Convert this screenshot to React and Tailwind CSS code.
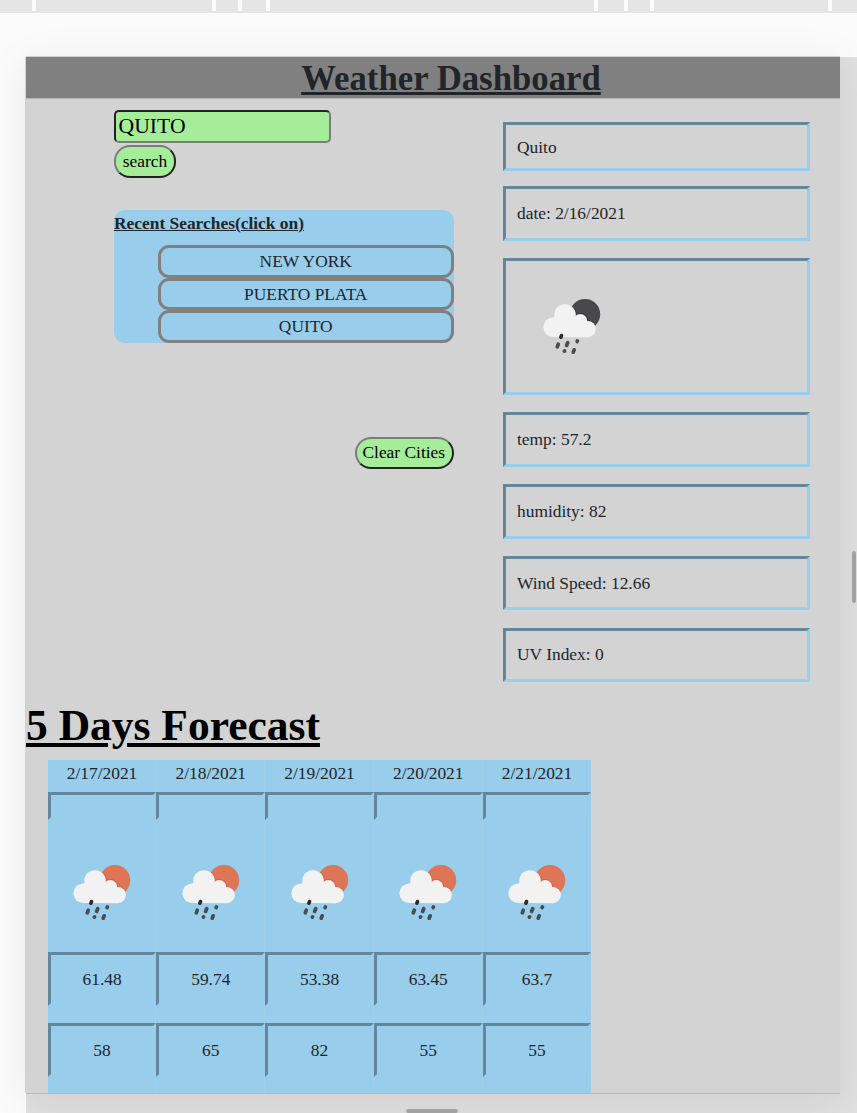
import React, { useId } from "react";

const details = [
  { text: "Quito", box: "h-[49px] mb-[15px] pt-[1px]" },
  { text: "date: 2/16/2021", box: "h-[55px] mb-[17px]" },
  { icon: true, box: "h-[137px] mb-[17px]" },
  { text: "temp: 57.2", box: "h-[55px] mb-[17px]" },
  { text: "humidity: 82", box: "h-[55px] mb-[17px]" },
  { text: "Wind Speed: 12.66", box: "h-[54px] mb-[18px]" },
  { text: "UV Index: 0", box: "h-[54px] pb-[1px]" },
];

const forecast = [
  { date: "2/17/2021", temp: "61.48", humidity: "58" },
  { date: "2/18/2021", temp: "59.74", humidity: "65" },
  { date: "2/19/2021", temp: "53.38", humidity: "82" },
  { date: "2/20/2021", temp: "63.45", humidity: "55" },
  { date: "2/21/2021", temp: "63.7", humidity: "55" },
];

const tabGaps = [
  "ml-[32px]",
  "ml-[176px]",
  "ml-[22px]",
  "ml-[24px]",
  "ml-[324px]",
  "ml-[26px]",
  "ml-[22px]",
  "ml-[174px]",
];

function RainIcon({ color, shade }) {
  const id = useId();
  return (
    <svg width="60" height="57" viewBox="12 8 60 57" className="block shrink-0">
      <clipPath id={id}>
        <circle cx="55" cy="24.2" r="15.2" />
      </clipPath>
      <circle cx="55" cy="24.2" r="15.2" fill={color} />
      <g clipPath={`url(#${id})`} fill={shade}>
        <circle cx="35" cy="25" r="11.6" />
        <circle cx="50.5" cy="30.4" r="7.6" />
        <circle cx="57.8" cy="39.2" r="9" />
      </g>
      <g fill="#f2f2f2">
        <circle cx="23.2" cy="37.2" r="9.8" />
        <circle cx="35" cy="25" r="10.8" />
        <circle cx="50.3" cy="30.8" r="6.9" />
        <circle cx="57.8" cy="39.1" r="8.1" />
        <path d="M23 28 L35 20 L46 28 L57 33 L58 47.2 L23.2 47 Z" />
      </g>
      <g stroke="#4b4b4d" strokeWidth="3.7" strokeLinecap="round">
        <path d="M31.5 45.6 L30.9 47.2" stroke="#2b2b2c" />
        <path d="M28.3 54.2 L27.3 56.8" />
        <path d="M37.8 52.6 L36.6 55.4" />
        <path d="M47.4 50.9 L47.1 51.6" />
        <path d="M34.6 60.9 L34.4 61.1" />
        <path d="M44.2 59.8 L43.2 62.2" />
      </g>
    </svg>
  );
}

function InsetCell({ className, children }) {
  return (
    <div
      className={`flex items-center justify-center border-[3px] border-t-[#64869b] border-l-[#64869b] border-r-[#98cdec] border-b-[#98cdec] ${className}`}
    >
      {children}
    </div>
  );
}

function SearchColumn() {
  return (
    <div className="ml-[88px] mt-[11px] flex w-[340px] flex-col">
      <input
        defaultValue="QUITO"
        className="h-[33px] w-[217px] rounded-[5px] border-2 border-t-[#222] border-l-[#222] border-r-[#7b7b7b] border-b-[#7b7b7b] bg-[#a6ed9a] px-[2.5px] text-[21.7px] text-black outline-none"
      />
      <button className="mt-[2px] h-[33px] w-[62px] rounded-[16px] border-2 border-t-[#7b7b7b] border-l-[#7b7b7b] border-r-[#222] border-b-[#222] bg-[#a6ed9a] text-[17.4px] leading-none text-black">
        search
      </button>
      <div className="mt-[32px] h-[133px] rounded-[11px] bg-[#98cdec]">
        <h2 className="h-[35px] text-[17.4px] leading-[26px] font-bold underline">
          Recent Searches(click on)
        </h2>
        <ul className="ml-[43.5px] text-center text-[17.4px] leading-[26.5px]">
          {["NEW YORK", "PUERTO PLATA", "QUITO"].map((city) => (
            <li
              key={city}
              className="h-[32.5px] rounded-[11px] border-[3px] border-[#808080]"
            >
              {city}
            </li>
          ))}
        </ul>
      </div>
      <button className="mt-[94px] h-[32px] w-[99.5px] self-end rounded-[16px] border-2 border-t-[#7b7b7b] border-l-[#7b7b7b] border-r-[#222] border-b-[#222] bg-[#a6ed9a] pr-[1px] text-[17.4px] leading-none whitespace-nowrap text-black">
        Clear Cities
      </button>
    </div>
  );
}

function DetailsColumn() {
  return (
    <div className="ml-[49px] mt-[23px] flex w-[307px] flex-col text-[17.4px]">
      {details.map((d, i) => (
        <div
          key={i}
          className={`flex items-center border-[3px] border-t-[#64869b] border-l-[#64869b] border-r-[#98cdec] border-b-[#98cdec] pl-[11px] ${d.box}`}
        >
          {d.icon ? (
            <div className="ml-[25px]">
              <RainIcon color="#48484a" shade="#363638" />
            </div>
          ) : (
            d.text
          )}
        </div>
      ))}
    </div>
  );
}

function ForecastTable() {
  return (
    <div className="ml-[21.7px] flex h-[333px] w-[543.7px] text-[17.4px]">
      {forecast.map((day) => (
        <div
          key={day.date}
          className="flex flex-1 flex-col bg-[#98cdec] shadow-[inset_-1px_0_0_#a2cfe8]"
        >
          <div className="h-[32px] text-center leading-[26px]">{day.date}</div>
          <InsetCell className="h-[28px]" />
          <div className="flex h-[132px] justify-center pt-[44px]">
            <RainIcon color="#dd7556" shade="#d4654a" />
          </div>
          <InsetCell className="h-[54px]">{day.temp}</InsetCell>
          <InsetCell className="mt-[17px] h-[54px]">{day.humidity}</InsetCell>
        </div>
      ))}
    </div>
  );
}

export default function App() {
  return (
    <div className="relative flex h-[1113px] w-[857px] flex-col overflow-hidden bg-[#fbfbfb] font-['Liberation_Serif','Times_New_Roman',serif] text-[#212529]">
      <div className="flex h-[13px] shrink-0 bg-[#e5e5e5]">
        {tabGaps.map((gap, i) => (
          <div key={i} className={`h-[11px] w-[4px] bg-[#fbfbfb] ${gap}`} />
        ))}
      </div>
      <div className="mt-[44px] ml-[26px] h-[1056px] bg-[#dfdfdf]">
        <div className="flex h-[1036px] w-[814px] flex-col bg-[#d3d3d3] shadow-[-1px_0_0_#d0d0d0,0_-1px_0_#cfcfcf,0_1px_0_#b9b9b9,0_6px_40px_rgba(0,0,0,0.08)]">
          <h1 className="h-[42px] border-b border-[#b4b4b4] bg-[#808080] pl-[36px] text-center text-[34.75px] leading-[43px] font-bold underline">
            Weather Dashboard
          </h1>
          <div className="flex h-[600px] items-start">
            <SearchColumn />
            <DetailsColumn />
          </div>
          <h1 className="h-[61px] text-[43.5px] leading-[52px] font-bold text-black underline">
            5 Days Forecast
          </h1>
          <ForecastTable />
        </div>
      </div>
      <div className="absolute top-[551px] left-[852px] h-[52px] w-[4px] rounded-full bg-[#a3a3a3]" />
      <div className="absolute top-[1109px] left-[406px] h-[4px] w-[52px] rounded-full bg-[#a3a3a3]" />
    </div>
  );
}
